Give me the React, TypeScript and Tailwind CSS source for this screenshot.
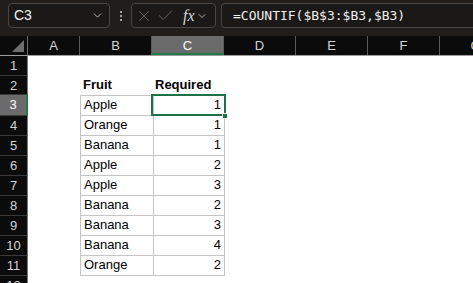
import { ChevronDown, X, Check } from 'lucide-react';

// Excel-style sheet: formula bar on top, grid with B2:C11 data block,
// C3 selected. Widths are in px to line up with the column headers.
const COLS = [
  { key: 'A', w: 'w-[52px]' },
  { key: 'B', w: 'w-[72px]' },
  { key: 'C', w: 'w-[72px]' },
  { key: 'D', w: 'w-[72px]' },
  { key: 'E', w: 'w-[72px]' },
  { key: 'F', w: 'w-[72px]' },
  { key: 'G', w: 'w-[72px]' },
];

const DATA: [string, number][] = [
  ['Apple', 1],
  ['Orange', 1],
  ['Banana', 1],
  ['Apple', 2],
  ['Apple', 3],
  ['Banana', 2],
  ['Banana', 3],
  ['Banana', 4],
  ['Orange', 2],
];

function FormulaBar() {
  return (
    <div className="flex h-[36px] items-start bg-[#201d1b] pl-[8px] pt-[3px]">
      <div className="flex h-[25px] w-[102px] items-center justify-between rounded-[4px] border border-[#4a4643] bg-[#1b1917] pl-[5px] pr-[5px]">
        <span className="text-[14px] text-[#f2f2f2]">C3</span>
        <ChevronDown className="h-[13px] w-[13px] text-[#cfcfcf]" strokeWidth={1.6} />
      </div>
      <div className="flex h-[25px] w-[21px] flex-col items-center justify-center gap-[2px]">
        <span className="h-[2px] w-[2px] rounded-full bg-[#d0d0d0]" />
        <span className="h-[2px] w-[2px] rounded-full bg-[#d0d0d0]" />
        <span className="h-[2px] w-[2px] rounded-full bg-[#d0d0d0]" />
      </div>
      <div className="flex h-[25px] w-[85px] items-center rounded-[4px] border border-[#4a4643] bg-[#1b1917] pl-[3px]">
        <X className="h-[18px] w-[18px] text-[#6a6765]" strokeWidth={1.2} />
        <Check className="ml-[3px] h-[19px] w-[19px] text-[#6a6765]" strokeWidth={1.2} />
        <span className="ml-[8px] font-['Liberation_Serif',serif] text-[16px] italic leading-none text-[#d6d6d6]">fx</span>
        <ChevronDown className="ml-[1px] h-[12px] w-[12px] text-[#cfcfcf]" strokeWidth={1.6} />
      </div>
      <div className="ml-[5px] flex h-[25px] flex-1 items-center rounded-l-[4px] border border-r-0 border-[#4a4643] bg-[#1b1917] pl-[11px]">
        <span className="font-['DejaVu_Sans_Mono',monospace] text-[13px] text-[#f0f0f0]">
          =COUNTIF($B$3:$B3,$B3)
        </span>
      </div>
    </div>
  );
}

function HeaderRow() {
  return (
    <div className="flex h-[20px] border-b border-[#9d9d9d] bg-[#0b0b0b]">
      <div className="relative w-[28px] shrink-0 border-r border-[#6a6a6a]">
        <div className="absolute bottom-[3px] right-[3px] h-0 w-0 border-b-[12px] border-l-[12px] border-b-[#6e6e6e] border-l-transparent" />
      </div>
      {COLS.map((c) => (
        <div
          key={c.key}
          className={`${c.w} shrink-0 border-r border-[#5c5c5c] text-center text-[13px] leading-[19px] ${
            c.key === 'C' ? 'border-b-2 border-b-[#1f7a48] bg-[#6b6b6b] text-white' : 'text-[#d4d4d4]'
          }`}
        >
          {c.key}
        </div>
      ))}
    </div>
  );
}

function RowHead({ n, active }: { n: number; active?: boolean }) {
  return (
    <div
      className={`h-full w-[28px] shrink-0 border-b border-[#3a3a3a] text-center text-[13px] leading-[20px] ${
        active ? 'border-r-2 border-r-[#1f7a48] bg-[#6b6b6b] text-white' : 'border-r border-r-[#7a7a7a] bg-[#0b0b0b] text-[#d4d4d4]'
      }`}
    >
      {n}
    </div>
  );
}

export default function App() {
  return (
    <div className="h-[283px] w-[473px] overflow-hidden bg-white font-['Liberation_Sans',Arial,sans-serif]">
      <FormulaBar />
      <HeaderRow />
      <div className="relative">
        <div className="flex h-[20px]">
          <RowHead n={1} />
        </div>
        <div className="flex h-[19px]">
          <RowHead n={2} />
          <div className="w-[52px] shrink-0" />
          <div className="flex w-[72px] shrink-0 items-end pb-[1px] pl-[3px] text-[13px] font-bold text-black">Fruit</div>
          <div className="flex w-[72px] shrink-0 items-end pb-[1px] pl-[3px] text-[13px] font-bold text-black">Required</div>
        </div>
        {DATA.map(([fruit, qty], i) => (
          <div key={i} className={`flex ${i === 0 ? 'h-[21px]' : 'h-[20px]'}`}>
            <RowHead n={i + 3} active={i === 0} />
            <div className="w-[52px] shrink-0" />
            <div
              className={`flex w-[73px] shrink-0 items-end border-b border-l border-[#c4c4c4] pb-[1px] pl-[3px] text-[13px] text-black ${
                i === 0 ? 'border-t' : ''
              }`}
            >
              {fruit}
            </div>
            <div
              className={`flex w-[72px] shrink-0 items-end justify-end border-b border-l border-r border-[#c4c4c4] pb-[1px] pr-[3px] text-[13px] text-black ${
                i === 0 ? 'border-t' : ''
              }`}
            >
              {qty}
            </div>
          </div>
        ))}
        <div className="flex h-[20px]">
          <RowHead n={12} />
        </div>

        {/* selection box on C3 + fill handle */}
        <div className="pointer-events-none absolute left-[151px] top-[38px] h-[22px] w-[75px] border-2 border-[#1f7048]" />
        <div className="absolute left-[222px] top-[57px] h-[6px] w-[6px] border border-white bg-[#1f7048]" />
      </div>
    </div>
  );
}
